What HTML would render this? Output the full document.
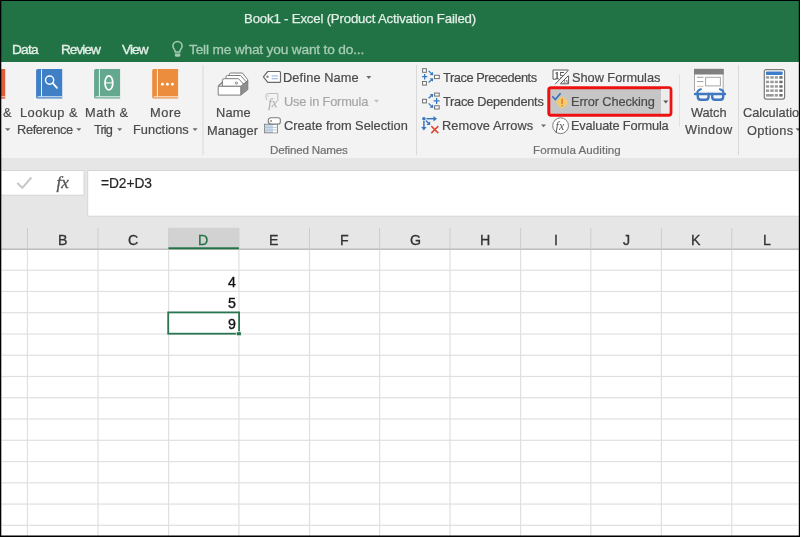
<!DOCTYPE html>
<html><head><meta charset="utf-8">
<style>
html,body{margin:0;padding:0;}
body{width:800px;height:537px;overflow:hidden;background:#000;position:relative;font-family:"Liberation Sans", sans-serif;}
.t{position:absolute;white-space:nowrap;line-height:normal;-webkit-text-stroke:0.2px currentColor;will-change:transform;font-family:"Liberation Sans", sans-serif;}
#svg{position:absolute;left:0;top:0;will-change:transform;}
</style></head><body>
<svg id="svg" width="800" height="537" viewBox="0 0 800 537">
  <!-- base areas -->
  <rect x="0" y="0" width="800" height="62" fill="#217346"/>
  <rect x="0" y="62" width="800" height="96" fill="#f3f3f3"/>
  <rect x="0" y="158" width="800" height="91.5" fill="#e6e6e6"/>
  <rect x="0" y="249.5" width="800" height="287.5" fill="#ffffff"/>
  <!-- formula bar boxes -->
  <rect x="1" y="170.5" width="83" height="24.7" fill="#fff" stroke="#d6d6d6" stroke-width="1"/>
  <rect x="87.7" y="170.5" width="712" height="45.7" fill="#fff" stroke="#d6d6d6" stroke-width="1"/>
  <!-- ribbon separators -->
  <g fill="#d9d9d9">
    <rect x="202.5" y="65" width="1" height="90"/>
    <rect x="416" y="65" width="1" height="90"/>
    <rect x="679" y="74" width="1" height="53" fill="#e1e1e1"/>
    <rect x="738" y="65" width="1" height="90"/>
  </g>
  <!-- GRID -->
  <g id="grid"><rect x="26.95" y="228" width="1" height="21" fill="#cccccc"/><rect x="97.50" y="228" width="1" height="21" fill="#cccccc"/><rect x="168.10" y="228" width="1" height="21" fill="#cccccc"/><rect x="238.40" y="228" width="1" height="21" fill="#cccccc"/><rect x="309.00" y="228" width="1" height="21" fill="#cccccc"/><rect x="379.10" y="228" width="1" height="21" fill="#cccccc"/><rect x="449.50" y="228" width="1" height="21" fill="#cccccc"/><rect x="520.10" y="228" width="1" height="21" fill="#cccccc"/><rect x="590.30" y="228" width="1" height="21" fill="#cccccc"/><rect x="660.90" y="228" width="1" height="21" fill="#cccccc"/><rect x="731.30" y="228" width="1" height="21" fill="#cccccc"/><rect x="168.6" y="227.8" width="70.3" height="20.5" fill="#d2d2d2"/><rect x="0" y="248.2" width="800" height="1" fill="#cacaca"/><rect x="168.4" y="247.3" width="70.5" height="1.9" fill="#217346"/><rect x="26.85" y="249.8" width="1.2" height="286" fill="#e0e0e0"/><rect x="97.40" y="249.8" width="1.2" height="286" fill="#e0e0e0"/><rect x="168.00" y="249.8" width="1.2" height="286" fill="#e0e0e0"/><rect x="238.30" y="249.8" width="1.2" height="286" fill="#e0e0e0"/><rect x="308.90" y="249.8" width="1.2" height="286" fill="#e0e0e0"/><rect x="379.00" y="249.8" width="1.2" height="286" fill="#e0e0e0"/><rect x="449.40" y="249.8" width="1.2" height="286" fill="#e0e0e0"/><rect x="520.00" y="249.8" width="1.2" height="286" fill="#e0e0e0"/><rect x="590.20" y="249.8" width="1.2" height="286" fill="#e0e0e0"/><rect x="660.80" y="249.8" width="1.2" height="286" fill="#e0e0e0"/><rect x="731.20" y="249.8" width="1.2" height="286" fill="#e0e0e0"/><rect x="1.5" y="269.60" width="797.3" height="1.2" fill="#e0e0e0"/><rect x="1.5" y="290.86" width="797.3" height="1.2" fill="#e0e0e0"/><rect x="1.5" y="312.12" width="797.3" height="1.2" fill="#e0e0e0"/><rect x="1.5" y="333.38" width="797.3" height="1.2" fill="#e0e0e0"/><rect x="1.5" y="354.64" width="797.3" height="1.2" fill="#e0e0e0"/><rect x="1.5" y="375.90" width="797.3" height="1.2" fill="#e0e0e0"/><rect x="1.5" y="397.16" width="797.3" height="1.2" fill="#e0e0e0"/><rect x="1.5" y="418.42" width="797.3" height="1.2" fill="#e0e0e0"/><rect x="1.5" y="439.68" width="797.3" height="1.2" fill="#e0e0e0"/><rect x="1.5" y="460.94" width="797.3" height="1.2" fill="#e0e0e0"/><rect x="1.5" y="482.20" width="797.3" height="1.2" fill="#e0e0e0"/><rect x="1.5" y="503.46" width="797.3" height="1.2" fill="#e0e0e0"/><rect x="1.5" y="524.72" width="797.3" height="1.2" fill="#e0e0e0"/><rect x="168.2" y="312.4" width="70.9" height="21.3" fill="none" stroke="#2a7650" stroke-width="1.8"/><rect x="236.3" y="331.8" width="5" height="4" fill="#217346" stroke="#fff" stroke-width="0.8"/></g>
  <!-- lightbulb -->
<g fill="none" stroke="#a6cbb3" stroke-width="1.5">
  <path d="M175.3,52 C175.3,49.6 172.9,48.6 172.9,46 A4.6,4.6 0 1 1 182.1,46 C182.1,48.6 179.7,49.6 179.7,52 Z"/>
</g>
<path d="M174.9,53.5 H180.3 V55.2 Q180.3,56.8 178.7,56.8 H176.5 Q174.9,56.8 174.9,55.2 Z" fill="#a6cbb3"/>

<!-- left partial book (Date & Time) -->
<rect x="0" y="69" width="5.2" height="29.7" fill="#df5d3b"/><rect x="0" y="96.3" width="5.2" height="1" fill="#f6d9d0"/>
<!-- books -->
<g id="books">
  <path d="M37.8,68.9 H62.2 V98.6 H37.8 Q36.1,98.6 36.1,96.9 V70.6 Q36.1,68.9 37.8,68.9 Z" fill="#3f7fc5"/>
  <rect x="41" y="69.4" width="1" height="27.5" fill="#e8f0f8"/>
  <rect x="37.6" y="96.3" width="24.6" height="1" fill="#e8f0f8"/>
  <circle cx="49.6" cy="80.1" r="4.1" fill="none" stroke="#fff" stroke-width="1.4"/>
  <line x1="52.7" y1="83.2" x2="57" y2="87.8" stroke="#fff" stroke-width="1.8" stroke-linecap="round"/>

  <path d="M95.8,68.9 H120.1 V98.6 H95.8 Q94.1,98.6 94.1,96.9 V70.6 Q94.1,68.9 95.8,68.9 Z" fill="#64a98f"/>
  <rect x="98.9" y="69.4" width="1" height="27.5" fill="#eef6f2"/>
  <rect x="95.6" y="96.3" width="24.5" height="1" fill="#eef6f2"/>
  <ellipse cx="108.9" cy="82.9" rx="3.9" ry="7" fill="none" stroke="#fff" stroke-width="1.7"/>
  <line x1="105.2" y1="82.9" x2="112.6" y2="82.9" stroke="#fff" stroke-width="1.1"/>

  <path d="M153.9,68.9 H178.1 V98.6 H153.9 Q152.2,98.6 152.2,96.9 V70.6 Q152.2,68.9 153.9,68.9 Z" fill="#ec8d3e"/>
  <rect x="156.9" y="69.4" width="1" height="27.5" fill="#fdf1e6"/>
  <rect x="153.7" y="96.3" width="24.4" height="1" fill="#fdf1e6"/>
  <circle cx="162.4" cy="84.3" r="1.45" fill="#fff"/>
  <circle cx="167.4" cy="84.3" r="1.45" fill="#fff"/>
  <circle cx="172.4" cy="84.3" r="1.45" fill="#fff"/>
</g>

<!-- dropdown arrows -->
<g fill="#6a6a6a">
  <path d="M5,128.2 H10.5 L7.75,131.1 Z"/>
  <path d="M76.3,128.2 H81.3 L78.8,131.1 Z"/>
  <path d="M117.2,128.2 H122.2 L119.7,131.1 Z"/>
  <path d="M192.6,128.2 H197.6 L195.1,131.1 Z"/>
  <path d="M366.3,76 H371.3 L368.8,78.9 Z"/>
  <path d="M541,124.5 H546 L543.5,127.3 Z"/>
  <path d="M663.3,100.5 H668.3 L665.8,103.4 Z"/>
  <path d="M795.5,128.2 H800.5 L798,131.1 Z"/>
</g>
<path d="M374,99.8 H379 L376.5,102.7 Z" fill="#c0c0c0"/>

<!-- Name Manager -->
<g stroke="#7d7d7d" stroke-width="1" fill="#fff" stroke-linejoin="round">
  <path d="M229.3,80 V74.3 Q229.3,73 230.6,73 H242.4 L247.6,79.5 V83 Z"/>
  <path d="M226,82 V76.8 Q226,75.5 227.3,75.5 H240.6 L246,81.6 V84 Z"/>
  <path d="M222.4,86.3 V80.4 Q222.4,78.7 224.1,78.7 H238.6 L244.5,85.2 V86.3 Z"/>
  <path d="M218.2,86.3 L222.4,82.3" fill="none" stroke-width="1.2"/>
  <path d="M240.8,86.3 L247.8,80.6 V89.6 L240.8,95.1 Z" fill="#8e8e8e"/>
  <rect x="218.2" y="86.3" width="22.6" height="8.8"/>
</g>
<circle cx="236.4" cy="83.1" r="1.1" fill="none" stroke="#7d7d7d" stroke-width="0.9"/>

<!-- Define Name tag -->
<path d="M263.4,76.8 L267.8,71.5 H279.5 Q280.5,71.5 280.5,72.5 V81.4 Q280.5,82.4 279.5,82.4 H267.8 Z" fill="#fff" stroke="#6a6a6a" stroke-width="1.2" stroke-linejoin="round"/>
<circle cx="267.5" cy="76.8" r="1.2" fill="#8a8a8a"/>
<rect x="271.6" y="75.3" width="6.3" height="1.2" fill="#9dbbe0"/>
<rect x="271.6" y="78.1" width="6.3" height="1.2" fill="#9dbbe0"/>

<!-- Use in Formula -->
<path d="M267,100 Q265.6,98 265.8,95.5 Q266.2,93.5 268.5,93.5 H277.8 V101" fill="none" stroke="#bdbdbd" stroke-width="1"/>
<circle cx="268.3" cy="96" r="0.8" fill="#c4c4c4"/>
<text x="268.2" y="106.6" font-family="Liberation Serif" font-style="italic" font-size="12.5" fill="#b4b4b4" stroke="#b4b4b4" stroke-width="0.25">fx</text>

<!-- Create from Selection -->
<rect x="264.5" y="124.3" width="13" height="8.5" fill="#c9dcef" stroke="#8c8c8c" stroke-width="1"/>
<rect x="273" y="124.8" width="4" height="7.6" fill="#fff"/>
<line x1="264.5" y1="127.3" x2="277.5" y2="127.3" stroke="#aeb9c4" stroke-width="0.8"/>
<line x1="264.5" y1="130" x2="277.5" y2="130" stroke="#aeb9c4" stroke-width="0.8"/>
<path d="M271,117.8 H278.3 Q280.3,117.8 280.3,119.8 V122 Q280.3,124 278.3,124 H271 Q268.2,124 268.2,121 Q268.2,117.8 271,117.8 Z" fill="#fff" stroke="#7a7a7a" stroke-width="1.1"/>
<circle cx="271" cy="121" r="1" fill="#8a8a8a"/>

<!-- Trace Precedents -->
<g fill="#fff" stroke="#6e6e6e" stroke-width="1">
  <rect x="422.6" y="68.7" width="3.8" height="3.6"/>
  <rect x="422.6" y="81.5" width="3.8" height="3.6"/>
  <rect x="434.5" y="75.3" width="4.8" height="3.3"/>
  <rect x="422.6" y="99.3" width="3.8" height="3.6"/>
  <rect x="434.6" y="93.1" width="4.6" height="3"/>
  <rect x="434.6" y="105.8" width="4.6" height="3.2"/>
</g>
<g stroke="#3a78bd" stroke-width="1.3" fill="none">
  <path d="M422,76.7 H427.3 M424.65,74 V79.4"/>
  <path d="M433.6,100.9 H439.6 M436.6,97.9 V103.9"/>
  <path d="M428.6,70.9 L432.2,74.3"/>
  <path d="M428.6,82.4 L432.2,79.2"/>
  <path d="M428.6,98.3 L432.2,95"/>
  <path d="M428.6,103.4 L432.2,106.9"/>
</g>
<g fill="#3a78bd">
  <path d="M433.2,75.3 L429.6,75 L432.9,71.7 Z"/>
  <path d="M433.2,78.2 L432.9,81.8 L429.6,78.5 Z"/>
  <path d="M433.2,94 L432.9,97.6 L429.6,94.3 Z"/>
  <path d="M433.2,107.9 L429.6,107.6 L432.9,104.3 Z"/>
</g>
<!-- Remove Arrows -->
<circle cx="423.9" cy="118.7" r="1.8" fill="#3a78bd"/>
<g stroke="#3a78bd" stroke-width="1.5" fill="none">
  <path d="M426.5,118.7 H434"/>
  <path d="M423.9,121 V127.5"/>
  <path d="M426,120.6 L428.5,123.2"/>
</g>
<g fill="#3a78bd">
  <path d="M433.5,116 L437,118.7 L433.5,121.4 Z"/>
  <path d="M421.2,127 L426.6,127 L423.9,130.6 Z"/>
  <path d="M430.2,121.2 L430.2,125 L426.4,125 Z"/>
</g>
<path d="M431.3,126.1 L438.3,133.1 M438.3,126.1 L431.3,133.1" stroke="#dc4a33" stroke-width="1.5"/>

<!-- Show Formulas -->
<path d="M553,70 H568.6 V83.8 H553 Z" fill="#fff"/>
<text x="554.4" y="78.6" font-family="Liberation Serif" font-size="10" fill="#3a3a3a" stroke="#3a3a3a" stroke-width="0.25">15</text>
<text x="563.6" y="83" font-family="Liberation Serif" font-style="italic" font-size="6.5" fill="#3a3a3a">fx</text>
<path d="M554.8,84.5 L568.4,70.2 L568.6,70.2 L568.6,75.8 L560.2,84.5 Z" fill="#f4f4f4"/>
<g fill="none" stroke="#5a5a5a" stroke-width="1">
  <path d="M553,79.2 V70 H568.4"/>
  <path d="M553,79.2 H556"/>
  <path d="M568.6,76 V83.8 H560.5"/>
  <path d="M555,84.3 L568.4,70.3"/>
  <path d="M560.4,83.8 L568.4,75.6"/>
</g>

<!-- Error Checking highlight box -->
<rect x="548.8" y="87.8" width="122.1" height="27.4" rx="2.2" fill="#c6c6c6" stroke="#ee1111" stroke-width="3"/>
<rect x="661" y="88.9" width="8.5" height="24.5" fill="#ececec"/>
<path d="M663.3,100.5 H668.3 L665.8,103.4 Z" fill="#555"/>
<path d="M552.3,96.3 L555.3,99.6 L560.6,93.3" fill="none" stroke="#3a6fb8" stroke-width="1.6"/>
<path d="M562.1,96.5 Q563,96.5 563.8,97.4 L567.8,101.6 Q568.6,102.4 567.8,103.2 L563.8,107.5 Q563,108.3 562.2,108.3 Q561.3,108.3 560.5,107.5 L556.5,103.2 Q555.7,102.4 556.5,101.6 L560.5,97.4 Q561.3,96.5 562.1,96.5 Z" fill="#f4cb66"/>
<rect x="561.4" y="98.6" width="1.4" height="5.4" fill="#e0722f"/>
<rect x="561.4" y="105" width="1.4" height="1.4" fill="#e0722f"/>

<!-- Evaluate Formula -->
<circle cx="560.6" cy="125.7" r="7.9" fill="#fff" stroke="#7a7a7a" stroke-width="1"/>
<text x="555.6" y="129.8" font-family="Liberation Serif" font-style="italic" font-size="12" fill="#555">fx</text>

<!-- Watch Window -->
<rect x="694" y="68.8" width="29.7" height="22" fill="#fff"/>
<path d="M694.5,91 V69.3 M723.2,69.3 V91" stroke="#a6a6a6" stroke-width="1" fill="none"/>
<rect x="694" y="68.8" width="29.7" height="5.7" fill="#808080"/>
<g stroke="#a0a0a0" stroke-width="1">
  <path d="M697,77.3 H703.5 M697,81.6 H703.5"/>
</g>
<path d="M697,86.3 H703.5" stroke="#dcb7a3" stroke-width="1"/>
<rect x="705.6" y="77.3" width="14.8" height="8.6" fill="#fff" stroke="#a6a6a6" stroke-width="1"/>
<g fill="none" stroke="#3f78c0" stroke-width="2.4" stroke-linejoin="round" stroke-linecap="round">
  <path d="M695,94 H725"/>
  <path d="M697.8,94 V96.8 Q697.8,99.8 700.6,99.8 H705.8 Q708.6,99.8 708.6,96.8 V94"/>
  <path d="M712.2,94 V96.8 Q712.2,99.8 715,99.8 H720.4 Q723.2,99.8 723.2,96.8 V94"/>
  <path d="M697.2,93 Q697.6,89.6 701,89.2" stroke-width="1.9"/>
  <path d="M723.6,93 Q723.2,89.6 719.8,89.2" stroke-width="1.9"/>
</g>

<!-- Calculator -->
<rect x="764.3" y="69.6" width="20.3" height="29.5" rx="2" fill="#fff" stroke="#7a7a7a" stroke-width="1.2"/>
<rect x="765.9" y="71.5" width="16.8" height="3.4" rx="1" fill="#3e7dca"/>
<g fill="#9a9a9a">
  <rect x="765.9" y="76.2" width="3.3" height="2.5"/><rect x="770.3" y="76.2" width="3.4" height="2.5"/><rect x="774.8" y="76.2" width="3.1" height="2.5"/>
  <rect x="765.9" y="80.7" width="3.3" height="2.5"/><rect x="770.3" y="80.7" width="3.4" height="2.5"/><rect x="774.8" y="80.7" width="3.1" height="2.5"/>
  <rect x="765.9" y="85.2" width="3.3" height="2.5"/><rect x="770.3" y="85.2" width="3.4" height="2.5"/><rect x="774.8" y="85.2" width="3.1" height="2.5"/>
  <rect x="765.9" y="89.4" width="3.3" height="2.5"/><rect x="770.3" y="89.4" width="3.4" height="2.5"/><rect x="774.8" y="89.4" width="3.1" height="2.5"/>
  <rect x="765.9" y="94" width="7.8" height="2.6"/><rect x="774.8" y="94" width="3.1" height="2.6"/>
</g>
<g fill="#6e6e6e">
  <rect x="779.3" y="76.2" width="3.3" height="2.5"/><rect x="779.3" y="80.7" width="3.3" height="2.5"/><rect x="779.3" y="85.2" width="3.3" height="2.5"/><rect x="779.3" y="89.4" width="3.3" height="2.5"/><rect x="779.3" y="94" width="3.3" height="2.6"/>
</g>

<!-- formula bar check and fx -->
<path d="M17.3,183 L22.3,187.8 L31.4,177.5" fill="none" stroke="#c6c6c6" stroke-width="2"/>
<text x="56.5" y="187.8" font-family="Liberation Serif" font-style="italic" font-size="17" fill="#555" stroke="#555" stroke-width="0.35">fx</text>

</svg>
<span class="t" style="left:243.50px;top:11px;font-size:13.2px;color:#e4efe8;letter-spacing:-0.170px;-webkit-text-stroke:0.25px currentColor;">Book1 - Excel (Product Activation Failed)</span>
<span class="t" style="left:12.10px;top:42px;font-size:13.7px;color:#e4efe8;letter-spacing:-0.800px;-webkit-text-stroke:0.35px currentColor;">Data</span>
<span class="t" style="left:60.80px;top:42px;font-size:13.7px;color:#e4efe8;letter-spacing:-1.019px;-webkit-text-stroke:0.35px currentColor;">Review</span>
<span class="t" style="left:122.00px;top:42px;font-size:13.7px;color:#e4efe8;letter-spacing:-0.945px;-webkit-text-stroke:0.35px currentColor;">View</span>
<span class="t" style="left:189.00px;top:42px;font-size:13.7px;color:#a8ccb5;letter-spacing:-0.176px;-webkit-text-stroke:0.3px currentColor;">Tell me what you want to do...</span>
<span class="t" style="left:3.10px;top:105px;font-size:12.8px;color:#4a4a4a;">&amp;</span>
<span class="t" style="left:19.60px;top:105px;font-size:12.8px;color:#4a4a4a;letter-spacing:0.480px;">Lookup &amp;</span>
<span class="t" style="left:16.50px;top:122px;font-size:12.8px;color:#4a4a4a;letter-spacing:-0.366px;">Reference</span>
<span class="t" style="left:85.20px;top:105px;font-size:12.8px;color:#4a4a4a;letter-spacing:0.519px;">Math &amp;</span>
<span class="t" style="left:93.80px;top:122px;font-size:12.8px;color:#4a4a4a;letter-spacing:-0.915px;">Trig</span>
<span class="t" style="left:149.70px;top:105px;font-size:12.8px;color:#4a4a4a;letter-spacing:0.587px;">More</span>
<span class="t" style="left:132.70px;top:122px;font-size:12.8px;color:#4a4a4a;letter-spacing:0.027px;">Functions</span>
<span class="t" style="left:216.00px;top:105px;font-size:12.8px;color:#4a4a4a;letter-spacing:0.161px;">Name</span>
<span class="t" style="left:207.20px;top:123px;font-size:12.8px;color:#4a4a4a;letter-spacing:0.076px;">Manager</span>
<span class="t" style="left:283.20px;top:70px;font-size:12.8px;color:#4a4a4a;letter-spacing:0.104px;">Define Name</span>
<span class="t" style="left:283.80px;top:94px;font-size:12.8px;color:#a6a6a6;letter-spacing:-0.188px;">Use in Formula</span>
<span class="t" style="left:283.80px;top:118px;font-size:12.8px;color:#4a4a4a;">Create from Selection</span>
<span class="t" style="left:442.60px;top:70px;font-size:12.8px;color:#4a4a4a;letter-spacing:-0.428px;">Trace Precedents</span>
<span class="t" style="left:442.60px;top:94px;font-size:12.8px;color:#4a4a4a;letter-spacing:-0.267px;">Trace Dependents</span>
<span class="t" style="left:441.60px;top:118px;font-size:12.8px;color:#4a4a4a;letter-spacing:0.065px;">Remove Arrows</span>
<span class="t" style="left:572.00px;top:70px;font-size:12.8px;color:#4a4a4a;letter-spacing:-0.042px;">Show Formulas</span>
<span class="t" style="left:571.20px;top:94px;font-size:12.8px;color:#4a4a4a;letter-spacing:-0.110px;">Error Checking</span>
<span class="t" style="left:571.20px;top:118px;font-size:12.8px;color:#4a4a4a;letter-spacing:-0.171px;">Evaluate Formula</span>
<span class="t" style="left:691.40px;top:105px;font-size:12.8px;color:#4a4a4a;letter-spacing:-0.069px;">Watch</span>
<span class="t" style="left:684.70px;top:122px;font-size:12.8px;color:#4a4a4a;letter-spacing:0.346px;">Window</span>
<span class="t" style="left:743.40px;top:105px;font-size:12.8px;color:#4a4a4a;">Calculation</span>
<span class="t" style="left:747.10px;top:123px;font-size:12.8px;color:#4a4a4a;letter-spacing:0.349px;">Options</span>
<span class="t" style="left:270.00px;top:143px;font-size:11.6px;color:#6f6f6f;letter-spacing:-0.184px;">Defined Names</span>
<span class="t" style="left:533.20px;top:143px;font-size:11.6px;color:#6f6f6f;letter-spacing:0.054px;">Formula Auditing</span>
<span class="t" style="left:100.50px;top:176px;font-size:13.8px;color:#262626;letter-spacing:-0.083px;">=D2+D3</span>
<span class="t" style="left:57.73px;top:232px;font-size:14.2px;color:#333333;-webkit-text-stroke:0.3px currentColor;">B</span>
<span class="t" style="left:128.30px;top:232px;font-size:14.2px;color:#333333;-webkit-text-stroke:0.3px currentColor;">C</span>
<span class="t" style="left:198.25px;top:232px;font-size:14.2px;color:#217346;-webkit-text-stroke:0.3px currentColor;">D</span>
<span class="t" style="left:269.20px;top:232px;font-size:14.2px;color:#333333;-webkit-text-stroke:0.3px currentColor;">E</span>
<span class="t" style="left:339.55px;top:232px;font-size:14.2px;color:#333333;-webkit-text-stroke:0.3px currentColor;">F</span>
<span class="t" style="left:409.80px;top:232px;font-size:14.2px;color:#333333;-webkit-text-stroke:0.3px currentColor;">G</span>
<span class="t" style="left:479.80px;top:232px;font-size:14.2px;color:#333333;-webkit-text-stroke:0.3px currentColor;">H</span>
<span class="t" style="left:553.70px;top:232px;font-size:14.2px;color:#333333;-webkit-text-stroke:0.3px currentColor;">I</span>
<span class="t" style="left:622.60px;top:232px;font-size:14.2px;color:#333333;-webkit-text-stroke:0.3px currentColor;">J</span>
<span class="t" style="left:691.10px;top:232px;font-size:14.2px;color:#333333;-webkit-text-stroke:0.3px currentColor;">K</span>
<span class="t" style="left:762.50px;top:232px;font-size:14.2px;color:#333333;-webkit-text-stroke:0.3px currentColor;">L</span>
<span class="t" style="left:228.00px;top:274px;font-size:14.2px;color:#111111;-webkit-text-stroke:0.35px currentColor;">4</span>
<span class="t" style="left:228.40px;top:295px;font-size:14.2px;color:#111111;-webkit-text-stroke:0.35px currentColor;">5</span>
<span class="t" style="left:228.40px;top:316px;font-size:14.2px;color:#111111;-webkit-text-stroke:0.35px currentColor;">9</span>
<svg style="position:absolute;left:0;top:0" width="800" height="537"><path fill="#000" fill-rule="evenodd" d="M0,0 H800 V537 H0 Z M1.3,1 H798.8 V535.4 H1.3 Z"/></svg>
</body></html>
